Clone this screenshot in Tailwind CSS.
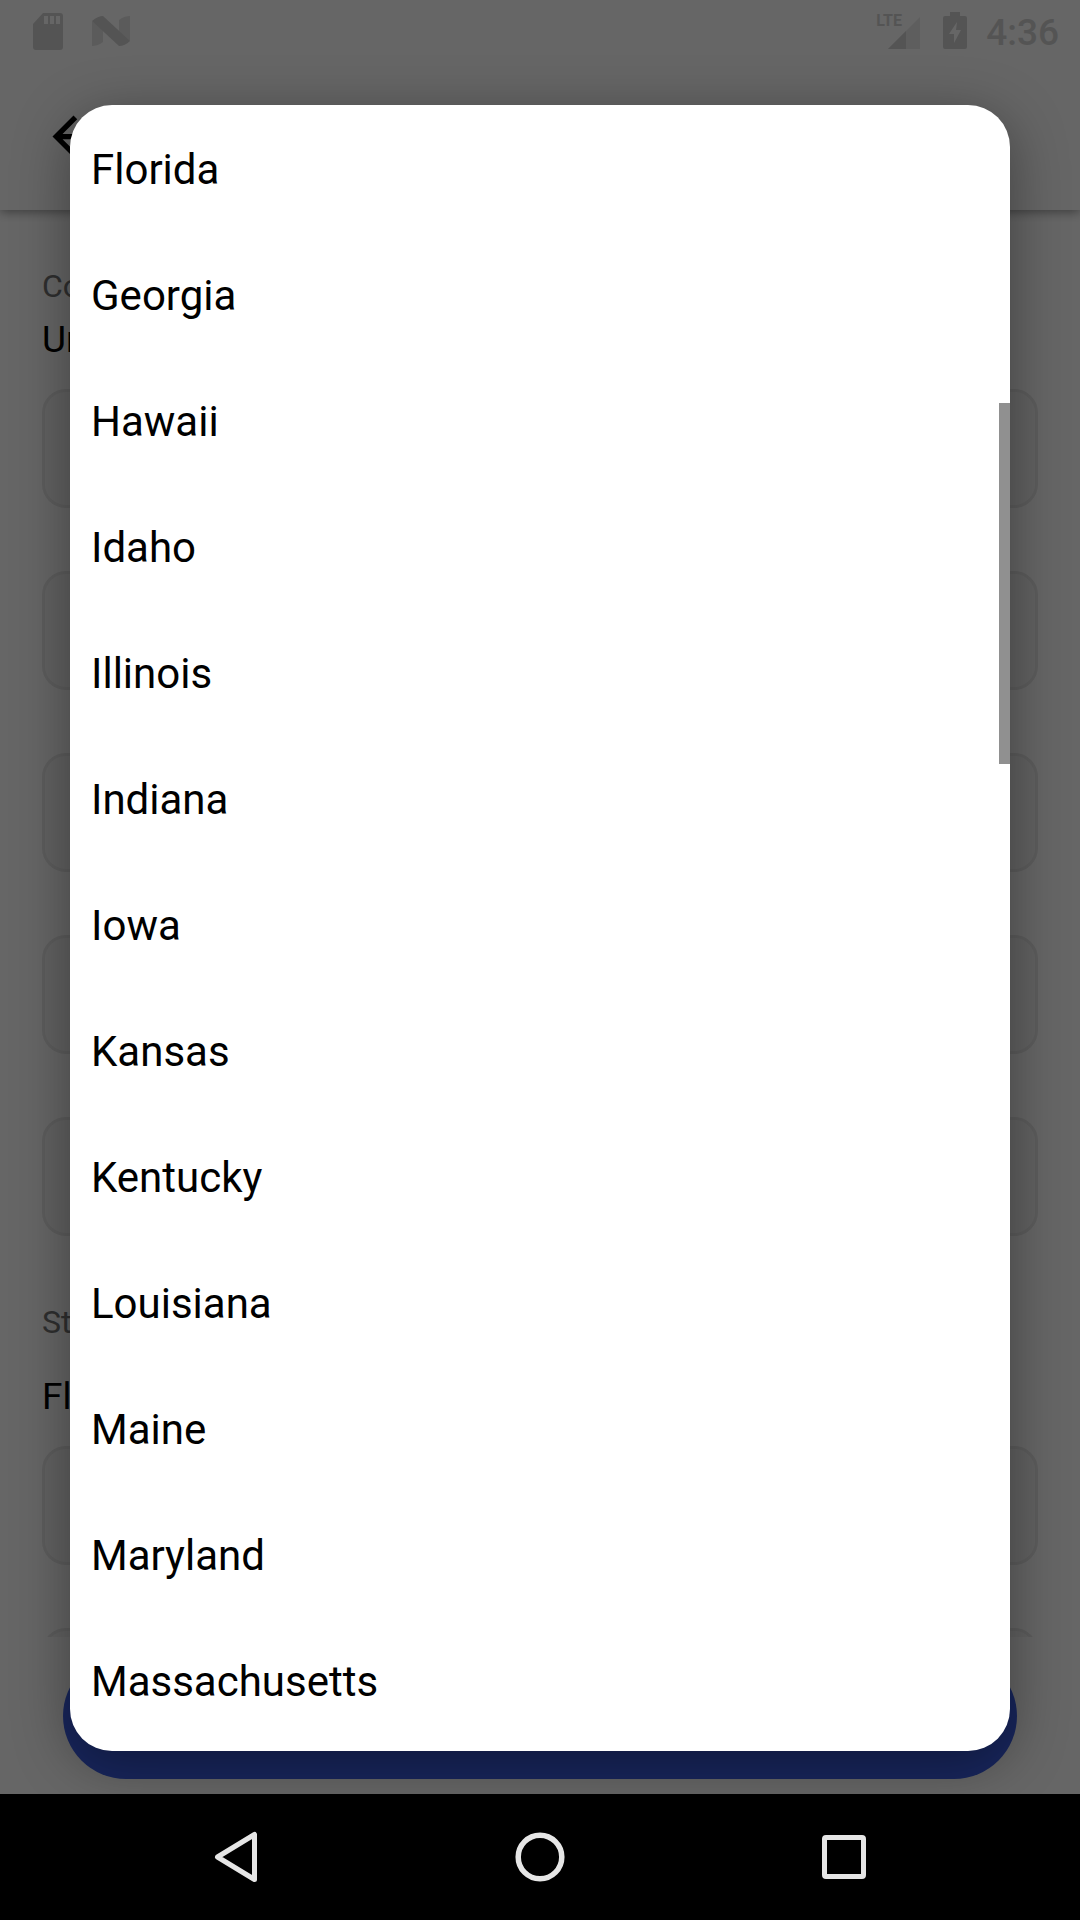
<!DOCTYPE html>
<html lang="en">
<head>
<meta charset="utf-8">
<meta name="viewport" content="width=device-width, initial-scale=1">
<title>Select state</title>
<script src="https://cdn.jsdelivr.net/npm/@tailwindcss/browser@4"></script>
</head>
<body class="flex h-screen flex-col overflow-hidden bg-black font-[Roboto,sans-serif] text-black">
<div class="relative flex min-h-0 flex-1 flex-col overflow-hidden bg-white">

  <!-- Status bar and toolbar -->
  <header class="relative shrink-0 bg-white shadow-[0_2px_10px_rgba(0,0,0,0.4)]">
    <div class="flex h-[63px] items-start justify-between pt-3 pr-[21px] pl-8 text-[#d2d2d2]">
      <div class="flex gap-[29px]">
        <svg class="h-[38px] w-[31px]" viewBox="0 0 31 38" fill="currentColor" aria-hidden="true"><path fill-rule="evenodd" d="M11 1H28a3 3 0 0 1 3 3V35a3 3 0 0 1-3 3H4a3 3 0 0 1-3-3V12ZM12 4V12H16V4ZM18 4V12H22V4ZM24 4V12H28V4Z"/></svg>
        <svg class="h-[38px] w-[38px]" viewBox="0 0 38 38" aria-hidden="true"><path fill="#e4e4e4" d="M0 9 11 17V30Q6 34 0 34ZM27 8Q32 4 38 4V29L27 24Z"/><path fill="#d2d2d2" d="M0 9Q6 4 11 4L38 29Q33 34 27 34Z"/></svg>
      </div>
      <div class="flex">
        <div class="relative mr-5 h-[38px] w-[46px]">
          <svg class="h-[38px] w-[46px]" viewBox="0 0 46 38" aria-hidden="true"><path fill="#ececec" d="M44 5V37H12Z"/><path fill="#d2d2d2" d="M30 19V37H12Z"/></svg>
          <span class="absolute top-0 left-0 text-base leading-[18px] font-bold">LTE</span>
        </div>
        <svg class="mr-[18px] h-[38px] w-[26px]" viewBox="0 0 26 38" fill="#d2d2d2" aria-hidden="true"><path fill-rule="evenodd" d="M8 0H18V4H23a2 2 0 0 1 2 2V35a2 2 0 0 1-2 2H3a2 2 0 0 1-2-2V6a2 2 0 0 1 2-2H8ZM15 10 7 22H12V31L19 18H14Z"/></svg>
        <time class="text-[37px] leading-[42px] font-medium">4:36</time>
      </div>
    </div>
    <div class="flex h-[147px] items-center px-[42px]">
      <button type="button" aria-label="Back">
        <svg class="size-[63px]" viewBox="0 0 24 24" fill="currentColor" aria-hidden="true"><path d="M20 11H7.83l5.59-5.59L12 4l-8 8 8 8 1.41-1.41L7.83 13H20z"/></svg>
      </button>
    </div>
  </header>

  <!-- Address form -->
  <form class="flex min-h-0 flex-1 flex-col overflow-hidden px-[42px] pt-[55px]">
    <label for="country" class="shrink-0 text-[32px] leading-[42px] text-[#777]">Country</label>
    <select id="country" class="mt-3 h-[42px] shrink-0 appearance-none text-[37px] leading-[42px]"><option>United States</option></select>
    <div class="mt-7 flex shrink-0 flex-col gap-[63px]">
      <input type="text" aria-label="First name" class="h-[119px] rounded-3xl border-3 border-[#e8e8e8] bg-[#f6f6f6] px-8">
      <input type="text" aria-label="Last name" class="h-[119px] rounded-3xl border-3 border-[#e8e8e8] bg-[#f6f6f6] px-8">
      <input type="text" aria-label="Address" class="h-[119px] rounded-3xl border-3 border-[#e8e8e8] bg-[#f6f6f6] px-8">
      <input type="text" aria-label="Apartment" class="h-[119px] rounded-3xl border-3 border-[#e8e8e8] bg-[#f6f6f6] px-8">
      <input type="text" aria-label="City" class="h-[119px] rounded-3xl border-3 border-[#e8e8e8] bg-[#f6f6f6] px-8">
    </div>
    <label for="state" class="mt-[65px] shrink-0 text-[32px] leading-[42px] text-[#777]">State</label>
    <select id="state" class="mt-[33px] h-[42px] shrink-0 appearance-none text-[37px] leading-[42px]"><option>Florida</option></select>
    <div class="mt-7 flex shrink-0 flex-col gap-[63px]">
      <input type="text" aria-label="Postal code" class="h-[119px] rounded-3xl border-3 border-[#e8e8e8] bg-[#f6f6f6] px-8">
      <input type="text" aria-label="Phone" class="h-[119px] rounded-3xl border-3 border-[#e8e8e8] bg-[#f6f6f6] px-8">
    </div>
  </form>
  <footer class="flex shrink-0 bg-white px-[63px] pt-4 pb-[15px]">
    <button type="button" aria-label="Save" class="h-[126px] flex-1 rounded-full bg-[#3d60e8]"></button>
  </footer>

  <!-- State picker -->
  <div class="absolute inset-0 flex bg-black/60 px-[70px] pt-[105px] pb-[43px]">
    <div role="dialog" aria-modal="true" aria-label="State" class="relative flex-1 overflow-hidden rounded-[42px] bg-white shadow-[0_12px_56px_rgba(0,0,0,0.38)]">
      <ul class="flex flex-col pt-px text-[42px]">
        <li class="flex h-[126px]"><button type="button" class="flex-1 px-[21px] text-left">Florida</button></li>
        <li class="flex h-[126px]"><button type="button" class="flex-1 px-[21px] text-left">Georgia</button></li>
        <li class="flex h-[126px]"><button type="button" class="flex-1 px-[21px] text-left">Hawaii</button></li>
        <li class="flex h-[126px]"><button type="button" class="flex-1 px-[21px] text-left">Idaho</button></li>
        <li class="flex h-[126px]"><button type="button" class="flex-1 px-[21px] text-left">Illinois</button></li>
        <li class="flex h-[126px]"><button type="button" class="flex-1 px-[21px] text-left">Indiana</button></li>
        <li class="flex h-[126px]"><button type="button" class="flex-1 px-[21px] text-left">Iowa</button></li>
        <li class="flex h-[126px]"><button type="button" class="flex-1 px-[21px] text-left">Kansas</button></li>
        <li class="flex h-[126px]"><button type="button" class="flex-1 px-[21px] text-left">Kentucky</button></li>
        <li class="flex h-[126px]"><button type="button" class="flex-1 px-[21px] text-left">Louisiana</button></li>
        <li class="flex h-[126px]"><button type="button" class="flex-1 px-[21px] text-left">Maine</button></li>
        <li class="flex h-[126px]"><button type="button" class="flex-1 px-[21px] text-left">Maryland</button></li>
        <li class="flex h-[126px]"><button type="button" class="flex-1 px-[21px] text-left">Massachusetts</button></li>
      </ul>
      <div class="absolute top-[298px] right-0 h-[361px] w-[11px] bg-[#909090]"></div>
    </div>
  </div>
</div>

<!-- System navigation -->
<nav class="flex h-[126px] shrink-0 bg-black px-[84px] text-[#e6e6e6]">
  <button type="button" aria-label="Back" class="flex flex-1 items-center justify-center"><svg class="size-[54px]" viewBox="0 0 54 54" fill="none" stroke="currentColor" stroke-width="5" stroke-linejoin="round" aria-hidden="true"><path d="M45.500 4.500V49.500L8.500 27Z"/></svg></button>
  <button type="button" aria-label="Home" class="flex flex-1 items-center justify-center"><svg class="size-[54px]" viewBox="0 0 54 54" fill="none" stroke="currentColor" stroke-width="5.500" aria-hidden="true"><circle cx="27" cy="27" r="21.800"/></svg></button>
  <button type="button" aria-label="Recent apps" class="flex flex-1 items-center justify-center"><svg class="size-[54px]" viewBox="0 0 54 54" fill="none" stroke="currentColor" stroke-width="5" aria-hidden="true"><rect x="7.500" y="7.500" width="39" height="39" rx="1.500"/></svg></button>
</nav>
</body>
</html>
